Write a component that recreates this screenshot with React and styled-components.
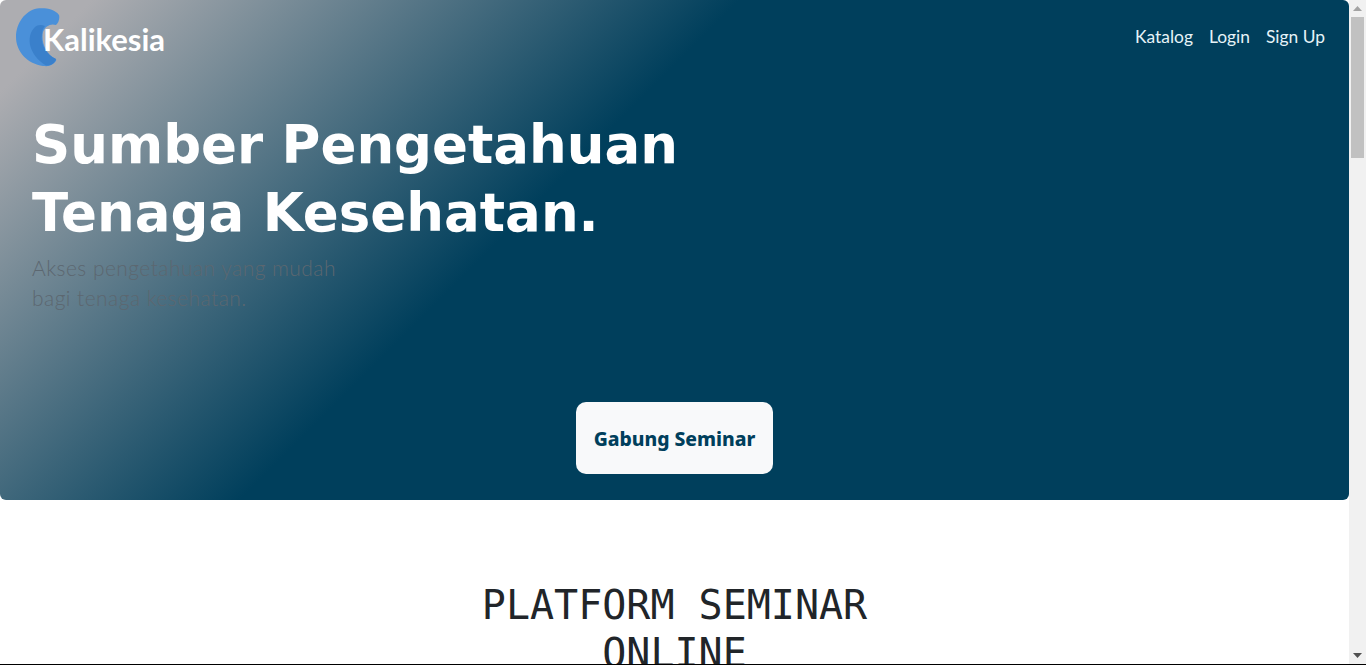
import React from "react";
import styled, { createGlobalStyle } from "styled-components";

const GlobalStyle = createGlobalStyle`
    html, body {
        margin: 0;
        height: 100%;
        overflow: hidden;
        background: #fff;
    }
    * {
        box-sizing: border-box;
    }
`;

const navLinks = ["Katalog", "Login", "Sign Up"];

const App = () => {
    return (
        <Page>
            <GlobalStyle />
            <Viewport>
                <Main>
                    <Hero>
                        <NavBar>
                            <Brand>
                                <svg width="46" height="60" viewBox="0 0 46 60">
                                    <path
                                        d="M21 0.5C29 -0.5 39 1 43 7C44 10 42.5 15 40 17C35 15 29 18 27 24C25 33 29 46 40 51C41 53 38 56 34 57.5C31 58.5 29 58 27 58C12 56 0 44 0 29C0 15 9 3 21 0.5Z"
                                        fill="#4a90d9"
                                    />
                                    <path
                                        d="M19 19C9 29 13 47 30 57.5C35 58 39 55 40 51C31 47 24 37 26 26C26 23 27 20 29 18C25 16 21 17 19 19Z"
                                        fill="#3a80cb"
                                    />
                                </svg>
                                <BrandName>Kalikesia</BrandName>
                            </Brand>
                            <NavList>
                                {navLinks.map((link) => (
                                    <NavItem key={link}>{link}</NavItem>
                                ))}
                            </NavList>
                        </NavBar>
                        <Title>
                            Sumber Pengetahuan
                            <br />
                            Tenaga Kesehatan.
                        </Title>
                        <SubTitle>
                            Akses pengetahuan yang mudah
                            <br />
                            bagi tenaga kesehatan.
                        </SubTitle>
                        <JoinButton>Gabung Seminar</JoinButton>
                    </Hero>
                    <Platform>
                        <PlatformTitle>PLATFORM SEMINAR ONLINE</PlatformTitle>
                    </Platform>
                </Main>
                <ScrollBar>
                    <ScrollArrow>
                        <svg width="9" height="5" viewBox="0 0 9 5">
                            <path d="M4.5 0L9 5H0Z" fill="#a3a3a3" />
                        </svg>
                    </ScrollArrow>
                    <ScrollTrack>
                        <ScrollThumb />
                    </ScrollTrack>
                    <ScrollArrow>
                        <svg width="9" height="5" viewBox="0 0 9 5">
                            <path d="M0 0H9L4.5 5Z" fill="#505050" />
                        </svg>
                    </ScrollArrow>
                </ScrollBar>
            </Viewport>
            <BottomLine />
        </Page>
    );
};

export default App;

const Page = styled.div`
    width: 1366px;
    height: 665px;
    display: flex;
    flex-direction: column;
    overflow: hidden;
`;

const Viewport = styled.div`
    flex: 1;
    min-height: 0;
    display: flex;
    overflow: hidden;
`;

const Main = styled.main`
    width: 1349px;
    overflow: hidden;
`;

const Hero = styled.section`
    height: 500px;
    border-radius: 6px;
    background: linear-gradient(135deg, #adadb1 5%, #003f5c 40%);
    display: flex;
    flex-direction: column;
`;

const NavBar = styled.nav`
    height: 111px;
    padding: 8px 24px 0 16px;
    display: flex;
    justify-content: space-between;
    align-items: flex-start;
`;

const Brand = styled.div`
    display: flex;
    align-items: center;
`;

const BrandName = styled.span`
    margin: 1px 0 0 -19px;
    font-family: "Lato", sans-serif;
    font-weight: 700;
    font-size: 31px;
    color: #fff;
`;

const NavList = styled.ul`
    margin: 18px 0 0;
    padding: 0;
    list-style: none;
    display: flex;
    gap: 16px;
`;

const NavItem = styled.li`
    font-family: "Lato", sans-serif;
    font-size: 17.4px;
    line-height: 22px;
    color: #e6f3f8;
`;

const Title = styled.h1`
    margin: 0;
    padding-left: 32px;
    font-family: "DejaVu Sans", sans-serif;
    font-weight: 700;
    font-size: 53px;
    line-height: 68px;
    color: #fff;
`;

const SubTitle = styled.p`
    margin: 6px 0 0;
    padding-left: 32px;
    font-family: "Lato", sans-serif;
    font-weight: 300;
    font-size: 21px;
    letter-spacing: 0.45px;
    line-height: 30px;
    color: #5c6770;
`;

const JoinButton = styled.button`
    align-self: center;
    width: 197px;
    height: 72px;
    margin-top: 89px;
    border: none;
    border-radius: 10px;
    background: #f8f9fa;
    font-family: "Noto Sans", sans-serif;
    font-weight: 800;
    font-size: 19.3px;
    color: #003f5c;
`;

const Platform = styled.section`
    padding-top: 81px;
    display: flex;
    justify-content: center;
`;

const PlatformTitle = styled.h2`
    width: 500px;
    margin: 0;
    font-family: "DejaVu Sans Mono", monospace;
    font-weight: 400;
    font-size: 40px;
    line-height: 48px;
    text-align: center;
    color: #212529;
`;

const ScrollBar = styled.aside`
    width: 17px;
    background: #f1f1f1;
    display: flex;
    flex-direction: column;
`;

const ScrollArrow = styled.div`
    height: 17px;
    display: flex;
    align-items: center;
    justify-content: center;
`;

const ScrollTrack = styled.div`
    flex: 1;
    padding: 0 2px;
`;

const ScrollThumb = styled.div`
    height: 141px;
    background: #c1c1c1;
`;

const BottomLine = styled.div`
    height: 1px;
    background: #000;
`;
